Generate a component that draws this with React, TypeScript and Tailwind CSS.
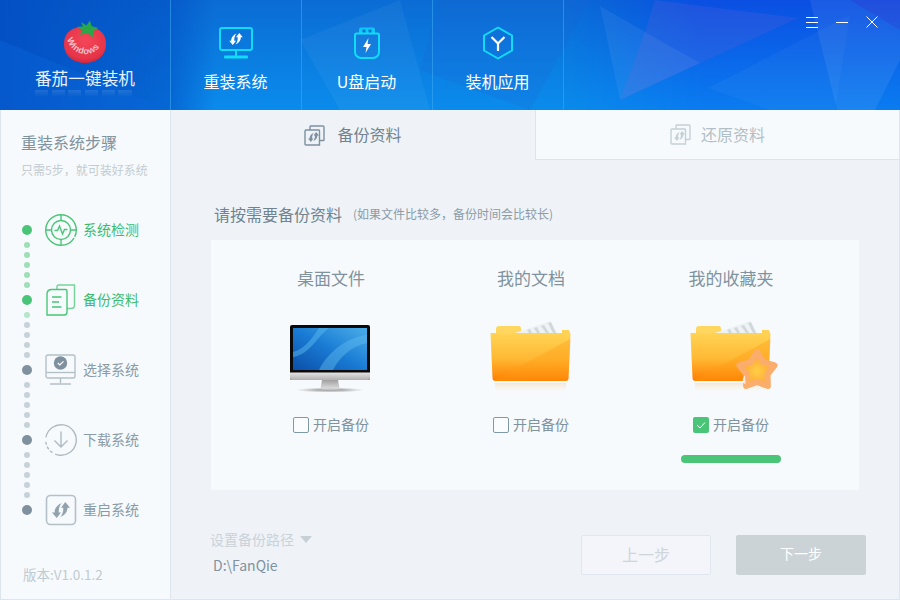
import React from "react";

const font = "font-['Noto_Sans_CJK_SC','Noto_Sans',sans-serif]";

function HeaderBg() {
  return (
    <svg className="absolute inset-0 w-[900px] h-[110px]" viewBox="0 0 900 110">
      <defs>
        <linearGradient id="hb" x1="0" y1="0" x2="0" y2="1">
          <stop offset="0" stopColor="#0a6cd4" />
          <stop offset="1" stopColor="#0a8cec" />
        </linearGradient>
        <linearGradient id="hl" x1="0" y1="0" x2="1" y2="0">
          <stop offset="0" stopColor="#0350c4" stopOpacity="1" />
          <stop offset="0.19" stopColor="#0350c4" stopOpacity="0.6" />
          <stop offset="0.24" stopColor="#0350c4" stopOpacity="0" />
        </linearGradient>
        <linearGradient id="hr" x1="0" y1="0" x2="0" y2="1">
          <stop offset="0" stopColor="#0a4fe2" stopOpacity="1" />
          <stop offset="1" stopColor="#0a7cf0" stopOpacity="1" />
        </linearGradient>
        <linearGradient id="hf" x1="0" y1="0" x2="1" y2="0">
          <stop offset="0" stopColor="#fff" stopOpacity="0" />
          <stop offset="1" stopColor="#fff" stopOpacity="1" />
        </linearGradient>
        <mask id="hm">
          <rect x="560" width="140" height="110" fill="url(#hf)" />
          <rect x="700" width="200" height="110" fill="#fff" />
        </mask>
      </defs>
      <rect width="900" height="110" fill="url(#hb)" />
      <rect width="900" height="110" fill="url(#hr)" mask="url(#hm)" />
      <rect width="900" height="110" fill="url(#hl)" />
      <polygon points="0,40 170,110 0,110" fill="#0a66da" opacity="0.4" />
      <polygon points="300,40 400,0 430,110 340,110" fill="#fff" opacity="0.045" />
      <polygon points="440,0 590,0 530,110 420,70" fill="#1f5fd0" opacity="0.18" />
      <polygon points="655,0 798,18 620,100 645,32" fill="#6a60d8" opacity="0.22" />
      <polygon points="600,6 645,32 700,63 620,100" fill="#fff" opacity="0.06" />
      <polygon points="708,88 850,15 835,110 770,110" fill="#fff" opacity="0.035" />
      <polygon points="810,0 850,0 900,30 900,60 875,110 837,110" fill="#fff" opacity="0.07" />
      <polygon points="850,0 900,0 900,30" fill="#5a50d0" opacity="0.3" />
    </svg>
  );
}

function Sync({ x, y, s, fill }: { x: number; y: number; s: number; fill: string }) {
  const d = "M4.500-8.500 L9.500-2.500 L6.800-2.500 C6.800 2 4 5.500-0.800 7.500 C2 4.500 2.400 1 2.400-2.500 L0-2.500 Z";
  return (
    <g transform={`translate(${x} ${y}) scale(${s})`} fill={fill} stroke="none">
      <path d={d} />
      <path d={d} transform="rotate(180)" />
    </g>
  );
}

function NavMonitor() {
  return (
    <svg width="36" height="34" viewBox="0 0 36 34" fill="none">
      <rect x="2" y="2" width="32" height="22" rx="2" stroke="#10dcf6" strokeWidth="2" />
      <Sync x={18} y={13} s={0.72} fill="#fff" />
      <path d="M18 25v6" stroke="#10dcf6" strokeWidth="2" />
      <rect x="6" y="29.500" width="24" height="3" rx="1" fill="#10dcf6" />
    </svg>
  );
}

function NavUsb() {
  return (
    <svg width="28" height="34" viewBox="0 0 28 34" fill="none">
      <path d="M6 8V3.500A2 2 0 0 1 8 1.500H20A2 2 0 0 1 22 3.500V8" fill="#10c8f4" />
      <rect x="9.500" y="3.500" width="3" height="4" fill="#0a74da" />
      <rect x="15.500" y="3.500" width="3" height="4" fill="#0a74da" />
      <path d="M2 9A1.500 1.500 0 0 1 3.500 7.500H24.500A1.500 1.500 0 0 1 26 9V26A6 6 0 0 1 20 32H8A6 6 0 0 1 2 26Z" stroke="#10dcf6" strokeWidth="2" />
      <path d="M15.500 12 L10 21H13.500L12.500 27L18 18H14.500Z" fill="#fff" />
    </svg>
  );
}

function NavHex() {
  return (
    <svg width="32" height="34" viewBox="0 0 32 34" fill="none">
      <path d="M16 1.500 L30 9.500V24.500L16 32.500L2 24.500V9.500Z" stroke="#10dcf6" strokeWidth="2" strokeLinejoin="round" />
      <path d="M9.500 11 L16 17.500 L22.500 11 M16 17.500V25" stroke="#fff" strokeWidth="2.200" />
    </svg>
  );
}

function Logo() {
  return (
    <svg width="46" height="44" viewBox="0 0 46 44">
      <defs>
        <radialGradient id="tom" cx="0.5" cy="0.35" r="0.7">
          <stop offset="0" stopColor="#f4465a" />
          <stop offset="0.75" stopColor="#e63448" />
          <stop offset="1" stopColor="#c8243a" />
        </radialGradient>
        <path id="arc" d="M5 19 C10 38 35 40 42 19" />
      </defs>
      <path d="M23 9 C33 5 44 11 44 24 C44 37 33 43 23 43 C13 43 2 37 2 24 C2 11 13 5 23 9Z" fill="url(#tom)" />
      <path d="M19 2 L24.500 5.500 L28 0.500 L29.500 6 L36 8 L31 11.500 L31 17 L25 13 L18 15 L20.500 10 L14 7 L21 6.500Z" fill="#2aa848" />
      <text fontSize="9" fontFamily="Liberation Sans, sans-serif" fontWeight="700" fill="#f3bfc6" letterSpacing="0.4">
        <textPath href="#arc">Windows</textPath>
      </text>
    </svg>
  );
}

function NavItem({ icon, label }: { icon: React.ReactNode; label: string }) {
  return (
    <div className="w-[131px] h-[110px] flex flex-col items-center border-l border-[#3ba6ee]/60 pt-[26px] pr-[1px]">
      <div className="h-[34px] flex items-center justify-center">{icon}</div>
      <div className="mt-[9px] text-[16px] leading-[24px] text-white">{label}</div>
    </div>
  );
}

function IconCheckStep() {
  return (
    <svg width="34" height="34" viewBox="0 0 34 34" fill="none" stroke="#4ac578" strokeWidth="1.400">
      <circle cx="17" cy="17" r="15.300" strokeDasharray="7 1.500 88" />
      <circle cx="17" cy="17" r="9.500" />
      <path d="M17 1.500V7.500 M17 26.500V32.500 M1.500 17H7.500 M26.500 17H32.500" />
      <path d="M10.500 17.500H13.500L15.500 13L18.500 21L20.500 16.500H23.500" />
    </svg>
  );
}

function IconFiles() {
  return (
    <svg width="30" height="32" viewBox="0 0 30 32" fill="none" stroke="#4ac578" strokeWidth="1.400">
      <path d="M11 5V2.500Q11 1 12.500 1H28.500V21Q28.500 24.500 25 24.500H21" opacity="0.75" />
      <path d="M1 10Q1 6 5 5.500H19.500Q21 5.500 21 7V28Q21 31 18 31H1Z" />
      <path d="M6 13H15.500 M6 18H13 M6 23H15.500" strokeWidth="1.600" />
    </svg>
  );
}

function IconSelect() {
  return (
    <svg width="32" height="32" viewBox="0 0 32 32" fill="none">
      <rect x="1" y="1" width="29" height="23" rx="2" stroke="#b4c0c8" strokeWidth="1.400" />
      <path d="M1 18.500H30" stroke="#b4c0c8" strokeWidth="1.400" />
      <path d="M15.500 24V29 M5 30H26" stroke="#b4c0c8" strokeWidth="1.400" />
      <circle cx="15.500" cy="9" r="6.700" fill="#7f919e" />
      <path d="M12.800 9L14.800 11L18.500 7.300" stroke="#fff" strokeWidth="1.100" />
    </svg>
  );
}

function IconDown() {
  return (
    <svg width="34" height="34" viewBox="0 0 34 34" fill="none" stroke="#aebbc3" strokeWidth="1.400">
      <circle cx="17" cy="17" r="15.300" strokeDasharray="75 3 3 2 3 2 3 30" transform="rotate(-170 17 17)" />
      <path d="M17 8.500V24 M10.500 17.500L17 24L23.500 17.500" />
    </svg>
  );
}

function IconRestart() {
  return (
    <svg width="32" height="32" viewBox="0 0 32 32" fill="none">
      <rect x="1.500" y="1.500" width="29" height="29" rx="4" stroke="#b4c0c8" strokeWidth="1.600" />
      <Sync x={16} y={16} s={0.95} fill="#93a3ad" />
    </svg>
  );
}

function TabIcon({ active }: { active: boolean }) {
  const c = active ? "#7d919e" : "#c5d0d5";
  return (
    <svg width="21" height="21" viewBox="0 0 21 21" fill="none" stroke={c} strokeWidth="1.400">
      <path d="M6 5V1.500Q6 1 6.500 1H19Q20 1 20 2V15Q20 15.500 19.500 15.500H15.500" />
      <path d="M1 6Q1 5 2 5H15Q15.500 5 15.500 6V20H2Q1 20 1 19Z" />
      <Sync x={9.500} y={12} s={0.58} fill={c} />
    </svg>
  );
}

function Monitor() {
  return (
    <svg width="82" height="74" viewBox="0 -5 82 74">
      <defs>
        <linearGradient id="scr" x1="0" y1="1" x2="1" y2="0">
          <stop offset="0" stopColor="#0b4fa8" />
          <stop offset="0.5" stopColor="#1a7bd4" />
          <stop offset="1" stopColor="#4aaee8" />
        </linearGradient>
        <linearGradient id="chin" x1="0" y1="0" x2="0" y2="1">
          <stop offset="0" stopColor="#e4e4e4" />
          <stop offset="1" stopColor="#b0b0b0" />
        </linearGradient>
        <linearGradient id="stand" x1="0" y1="0" x2="0" y2="1">
          <stop offset="0" stopColor="#a0a0a0" />
          <stop offset="1" stopColor="#dcdcdc" />
        </linearGradient>
        <radialGradient id="shad">
          <stop offset="0" stopColor="#777" />
          <stop offset="1" stopColor="#888" stopOpacity="0" />
        </radialGradient>
      </defs>
      <ellipse cx="41" cy="65" rx="34" ry="2.500" fill="url(#shad)" />
      <path d="M33 55H49L50.500 63.500H31.500Z" fill="url(#stand)" />
      <path d="M27 65.500Q41 62 55 65.500Z" fill="#c4c4c4" />
      <rect x="1" y="0" width="80" height="55" rx="2" fill="#0a0a0a" />
      <path d="M1 47.500H81V53Q81 55 79 55H3Q1 55 1 53Z" fill="url(#chin)" />
      <rect x="4" y="3" width="74" height="42" fill="url(#scr)" />
      <path d="M4 32C20 30 28 12 40 3L30 3C24 12 16 24 4 27Z" fill="#58b8ee" opacity="0.5" />
      <path d="M30 45C40 25 60 12 78 10V18C62 21 50 33 44 45Z" fill="#62bcf0" opacity="0.45" />
    </svg>
  );
}

function Folder({ star, id }: { star?: boolean; id: string }) {
  return (
    <svg width="90" height="74" viewBox="0 0 90 74">
      <defs>
        <linearGradient id={`f${id}`} x1="0" y1="0" x2="0" y2="1">
          <stop offset="0" stopColor="#ffd455" />
          <stop offset="0.55" stopColor="#ffb733" />
          <stop offset="1" stopColor="#ff7d00" />
        </linearGradient>
        <linearGradient id={`r${id}`} x1="0" y1="0" x2="0" y2="1">
          <stop offset="0" stopColor="#f5d9b5" stopOpacity="0.6" />
          <stop offset="1" stopColor="#f7fafd" stopOpacity="0" />
        </linearGradient>
        <radialGradient id={`s${id}`} cx="0.5" cy="0.55" r="0.6">
          <stop offset="0" stopColor="#ffce45" />
          <stop offset="0.7" stopColor="#ffaa38" />
          <stop offset="1" stopColor="#fb9c50" />
        </radialGradient>
      </defs>
      <path d="M6 9Q6 6 9 6H29Q31 6 31 9V14H6Z" fill="#ffd760" />
      <path d="M72 10H78Q80 10 80 14H72Z" fill="#ffd255" />
      <path d="M25 13L60 1L68 14H30Z" fill="#eef2f3" />
      <path d="M37 10l3-1 2 4h-3zM44 8l3-1 3 6h-3zM51 6l3-1 5 8h-3zM58 3l3-1 5 11h-3z" fill="#cfd9dc" />
      <path d="M0.500 13H80.500L78.500 58Q78.500 61 75.500 61H5.500Q2.500 61 2.500 58Z" fill={`url(#f${id})`} />
      <path d="M4 60L80.500 19L78.500 58Q78.500 61 75.500 61H5.500Z" fill="#ff9a10" opacity="0.35" />
      <rect x="5" y="63" width="71" height="11" fill={`url(#r${id})`} />
      {star && (
        <g>
          <path
            d="M67 32.500L73.500 42.100L84.600 45.300L77.500 54.400L77.900 66L67 62L56.100 66L56.500 54.400L49.400 45.300L60.500 42.100Z"
            fill={`url(#s${id})`}
            stroke="#fbad6c"
            strokeWidth="6"
            strokeLinejoin="round"
          />
          <path d="M53 63Q52 58 55 55L55.500 64Z" fill="#fff" opacity="0.75" />
        </g>
      )}
    </svg>
  );
}

function BackupCol({
  title,
  image,
  checked,
}: {
  title: string;
  image: React.ReactNode;
  checked?: boolean;
}) {
  return (
    <div className="w-[200px] flex flex-col items-center pt-[26px]">
      <div className="text-[17px] leading-[24px] text-[#7f929e]">{title}</div>
      <div className="mt-[30px] h-[74px] flex items-center justify-center">{image}</div>
      <div className="mt-[21px] h-[20px] flex items-center gap-[4px]">
        {checked ? (
          <span className="w-[16px] h-[16px] rounded-[2px] bg-[#4ac578] flex items-center justify-center">
            <svg width="10" height="8" viewBox="0 0 10 8" fill="none">
              <path d="M1 4L4 7L9 1.500" stroke="#fff" strokeWidth="1" />
            </svg>
          </span>
        ) : (
          <span className="w-[16px] h-[16px] rounded-[2px] border border-[#7f99a8] bg-white/40" />
        )}
        <span className="text-[14px] leading-[20px] pb-[2px] text-[#7f929e]">开启备份</span>
      </div>
      {checked && <div className="mt-[20px] w-[100px] h-[8px] rounded-full bg-[#4ac578]" />}
    </div>
  );
}

function Dots() {
  const big = (c: string, k: string) => <div key={k} className={`w-[10px] h-[10px] rounded-full ${c}`} />;
  const small = (c: string, k: string) => <div key={k} className={`w-[6px] h-[6px] rounded-full ${c}`} />;
  const gr = "bg-[#9fdfb8]";
  const gy = "bg-[#c6d2d9]";
  const groups: [string, string[]][] = [
    ["bg-[#4ac578]", [gr, gr, gr, gr, gr]],
    ["bg-[#4ac578]", ["bg-[#b5e6c8]", gy, gy, gy, gy]],
    ["bg-[#7f919e]", [gy, gy, gy, gy, gy]],
    ["bg-[#7f919e]", [gy, gy, gy, gy, gy]],
  ];
  return (
    <div className="ml-[21px] mt-[30px] w-[10px] flex flex-col items-center">
      {groups.map(([b, ss], i) => (
        <div key={i} className="flex flex-col items-center">
          {big(b, "b")}
          <div className="flex flex-col items-center gap-[4px] my-[7px]">
            {ss.map((c, j) => small(c, String(j)))}
          </div>
        </div>
      ))}
      {big("bg-[#7f919e]", "last")}
    </div>
  );
}

function Step({ icon, label, green }: { icon: React.ReactNode; label: string; green?: boolean }) {
  return (
    <div className="h-[70px] flex items-center">
      <div className="w-[34px] flex justify-center">{icon}</div>
      <div className={`ml-[5px] text-[14px] leading-[20px] pb-[2px] ${green ? "text-[#3ebc6c]" : "text-[#8b9ba6]"}`}>{label}</div>
    </div>
  );
}

export default function App() {
  return (
    <div className={`w-[900px] h-[600px] flex flex-col overflow-hidden bg-[#eff3f8] ${font}`}>
      <header className="relative h-[110px] shrink-0 flex">
        <HeaderBg />
        <div className="relative w-[170px] h-[110px] flex flex-col items-center pt-[20px]">
          <Logo />
          <div className="mt-[2px] text-[16.700px] leading-[24px] text-[#e8f2ff]">番茄一键装机</div>
          <div className="w-[100px] h-[7px] bg-[repeating-linear-gradient(90deg,#ffffff1c_0_13px,#ffffff00_13px_16.700px)] [mask-image:linear-gradient(to_bottom,#000,transparent)]" />
        </div>
        <div className="relative flex">
          <NavItem icon={<NavMonitor />} label="重装系统" />
          <NavItem icon={<NavUsb />} label="U盘启动" />
          <NavItem icon={<NavHex />} label="装机应用" />
          <div className="w-[1px] h-[110px] bg-[#3ba6ee]/60" />
        </div>
        <div className="absolute right-[22px] top-[16px] flex items-center gap-[18px]">
          <svg width="12" height="12" viewBox="0 0 12 12" stroke="#fff" strokeWidth="1"><path d="M0 1.500H12M0 6.500H12M0 11.500H12" /></svg>
          <svg width="12" height="12" viewBox="0 0 12 12" stroke="#fff" strokeWidth="1"><path d="M0 6.500H12" /></svg>
          <svg width="12" height="12" viewBox="0 0 12 12" stroke="#fff" strokeWidth="1"><path d="M0.500 0.500L11.500 11.500M11.500 0.500L0.500 11.500" /></svg>
        </div>
      </header>

      <div className="flex-1 flex min-h-0 border-b border-r border-[#dde5ee]">
        <aside className="w-[171px] shrink-0 bg-[#f7fafd] border-l border-r border-[#dde5ee] flex flex-col">
          <div className="pl-[20px] pt-[20px]">
            <div className="text-[16px] leading-[24px] text-[#7f929e]">重装系统步骤</div>
            <div className="mt-[7px] text-[12px] leading-[18px] text-[#c3ccd2]">只需5步，就可装好系统</div>
          </div>
          <div className="flex items-start mt-[16px]">
            <Dots />
            <div className="ml-[12px] flex flex-col">
              <Step icon={<IconCheckStep />} label="系统检测" green />
              <Step icon={<IconFiles />} label="备份资料" green />
              <Step icon={<IconSelect />} label="选择系统" />
              <Step icon={<IconDown />} label="下载系统" />
              <Step icon={<IconRestart />} label="重启系统" />
            </div>
          </div>
          <div className="mt-auto pb-[16px] pl-[22px] text-[13.500px] leading-[18px] text-[#c0cad0]">版本:V1.0.1.2</div>
        </aside>

        <main className="flex-1 min-w-0 flex flex-col">
          <div className="h-[50px] flex shrink-0">
            <div className="w-[364px] flex items-center justify-center gap-[12px] text-[16px] text-[#70838f]">
              <TabIcon active />
              <span className="pb-[2px]">备份资料</span>
            </div>
            <div className="flex-1 flex items-center justify-center gap-[10px] bg-[#f7fafd] border-l border-b border-[#dde5ea] text-[16px] text-[#b3bfc6]">
              <TabIcon active={false} />
              <span className="pb-[2px]">还原资料</span>
            </div>
          </div>
          <div className="mt-[42px] pl-[43px] h-[24px] flex items-center">
            <span className="text-[16px] leading-[24px] text-[#70838f]">请按需要备份资料</span>
            <span className="ml-[11px] text-[12px] text-[#8b9ba6]">(如果文件比较多，备份时间会比较长)</span>
          </div>
          <div className="mt-[14px] ml-[40px] w-[648px] h-[250px] bg-[#f7fafd] flex pl-[20px]">
            <BackupCol title="桌面文件" image={<div className="pr-[2px]"><Monitor /></div>} />
            <BackupCol title="我的文档" image={<div className="pl-[8px]"><Folder id="a" /></div>} />
            <BackupCol title="我的收藏夹" image={<div className="pl-[8px]"><Folder id="b" star /></div>} checked />
          </div>
          <div className="mt-[45px] pl-[39px] flex">
            <div className="w-[371px]">
              <div className="flex items-center h-[20px] -mt-[6px] gap-[6px]">
                <span className="text-[14px] leading-[20px] text-[#cad2d8]">设置备份路径</span>
                <span className="w-0 h-0 border-x-[6px] border-x-transparent border-t-[7px] border-t-[#c6d0d6]" />
              </div>
              <div className="mt-[6px] pl-[3px] text-[14px] leading-[20px] text-[#7f929e]">D:\FanQie</div>
            </div>
            <div className="w-[130px] h-[40px] rounded-[2px] bg-[#f3f5fa] border border-[#e1e7ee] flex items-center justify-center pb-[3px] text-[16px] text-[#ced6db]">上一步</div>
            <div className="ml-[25px] w-[130px] h-[40px] rounded-[2px] bg-[#cbd3d6] flex items-center justify-center pb-[3px] text-[14px] text-white">下一步</div>
          </div>
        </main>
      </div>
    </div>
  );
}
